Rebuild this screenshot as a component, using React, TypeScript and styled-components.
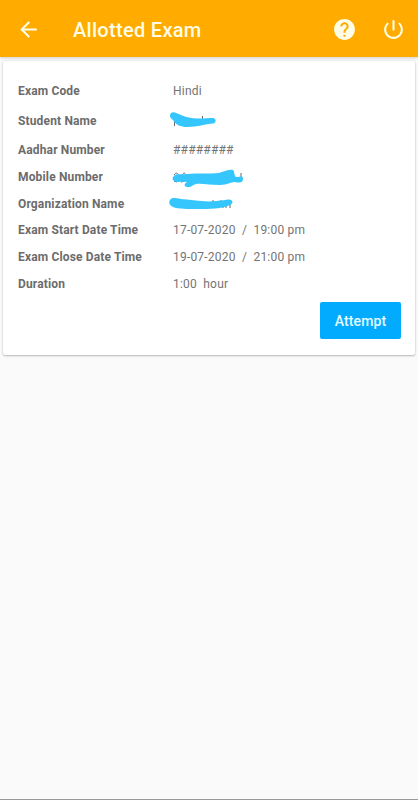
import React from "react";
import styled, { createGlobalStyle } from "styled-components";

const GlobalStyle = createGlobalStyle`
  * { box-sizing: border-box; }
  body { margin: 0; background: #fafafa; font-family: Roboto, sans-serif; }
`;

const Screen = styled.div`
  height: 800px;
  display: flex;
  flex-direction: column;
  background: #fafafa;
  border-bottom: 1px solid #999;
  overflow: hidden;
`;

const Toolbar = styled.header`
  height: 57px;
  flex: none;
  display: flex;
  align-items: center;
  padding: 2px 12px 0 16px;
  background: #ffab00;
  box-shadow: 0 1px 3px rgba(0, 0, 0, 0.18);
  color: #fffde6;
`;

const Title = styled.h1`
  flex: 1;
  margin: 0 0 0 32px;
  font-size: 20px;
  line-height: 28px;
  font-weight: 500;
  letter-spacing: 0.3px;
  white-space: nowrap;
`;

const IconButton = styled.button<{ $gap?: number }>`
  display: flex;
  margin: 0 0 0 ${(p) => p.$gap ?? 0}px;
  padding: 0;
  border: 0;
  background: none;
  color: inherit;
`;

const Card = styled.main`
  height: 294px;
  margin: 4px 3px 0;
  padding: 15px 14px 0 15px;
  display: flex;
  flex-direction: column;
  background: #fff;
  border-radius: 2px;
  box-shadow: 0 1px 2px rgba(0, 0, 0, 0.24), 0 0 2px rgba(0, 0, 0, 0.12);
`;

const Details = styled.dl`
  margin: 0;
`;

const Row = styled.div<{ $height: number }>`
  height: ${(p) => p.$height}px;
  display: grid;
  grid-template-columns: 155px 1fr;
  align-items: center;
  font-size: 12px;
  line-height: 16px;
  color: #747474;
`;

const Label = styled.dt`
  font-weight: 700;
  color: #6c6c6c;
  letter-spacing: 0.15px;
  white-space: nowrap;
`;

const Value = styled.dd`
  position: relative;
  height: 16px;
  margin: 0;
  letter-spacing: 0.2px;
  white-space: pre;
`;

const Scribble = styled.svg`
  position: absolute;
  left: -5px;
  top: -1px;
`;

const AttemptButton = styled.button`
  align-self: flex-end;
  width: 81px;
  height: 37px;
  margin-top: 5px;
  padding: 2px 0 0;
  border: 0;
  border-radius: 2px;
  background: #03abff;
  color: #e5fcff;
  font: 500 14px/20px Roboto, sans-serif;
  letter-spacing: 0.1px;
`;

const Icon = ({ d, size }: { d: string; size: number }) => (
  <svg width={size} height={size} viewBox="0 0 24 24" fill="currentColor">
    <path d={d} />
  </svg>
);

const BACK = "M20 11H7.83l5.59-5.59L12 4l-8 8 8 8 1.41-1.41L7.83 13H20v-2z";
const HELP =
  "M12 2C6.48 2 2 6.48 2 12s4.48 10 10 10 10-4.48 10-10S17.52 2 12 2zm1 17h-2v-2h2v2zm2.07-7.75l-.9.92C13.45 12.9 13 13.5 13 15h-2v-.5c0-1.1.45-2.1 1.17-2.83l1.24-1.26c.37-.36.59-.86.59-1.41 0-1.1-.9-2-2-2s-2 .9-2 2H8c0-2.21 1.79-4 4-4s4 1.79 4 4c0 .88-.36 1.68-.93 2.25z";
const POWER =
  "M13 3h-2v10h2V3zm4.83 2.17l-1.42 1.42C17.99 7.86 19 9.81 19 12c0 3.87-3.13 7-7 7s-7-3.13-7-7c0-2.19 1.01-4.14 2.58-5.42L6.17 5.17C4.23 6.82 3 9.26 3 12c0 4.97 4.03 9 9 9s9-4.03 9-9c0-2.74-1.23-5.18-3.17-6.83z";

type Mask = { fill: string; traces: string };

// Hand-drawn strokes that hide private values, with the slivers left visible.
const NAME_MASK: Mask = {
  fill: "M3 1C5-1 9 1 13 3C18 5 23 6.5 30 6.5C36 6.5 41 6 45 6C48.5 6.5 48.5 11 45 11.5C37 12 30 15 19 15C13 15 8 13 5 8C2 6 1 3 3 1Z",
  traces: "M6.5 8V14M34.5 4V7",
};
const MOBILE_MASK: Mask = {
  fill: "M6 8C8 5 14 7 19 6C29 5 41 6 51 5C57 3 62 1 65 2C67 4 66 8 68 9C73 9 75 7 75 11C75 15 71 15 67 14C62 14 60 17 52 17C42 17 33 15 28 16C24 17 23 20 19 19C15 18 17 15 19 14C14 13 9 15 6 13C4 11 4 10 6 8Z",
  traces: "M6 7C8 4 9 5 11 7M14 7C16 4 17 5 18 7M6 13L9 14M13 14L17 13M73 5V14",
};
const ORGANIZATION_MASK: Mask = {
  fill: "M5 3C9 3 19 5 33 6C42 7 52 6 60 4.5C65 4 66 8 62 10C55 14 40 14 31 14C20 14 10 14 5 12C-1 9 1 4 5 3Z",
  traces: "M45 5V7M53 5V7M51 10V13M55 10V13M58 9V13M62 8V13",
};

type Field = {
  label: string;
  height: number;
  value?: string;
  mask?: Mask;
};

const FIELDS: Field[] = [
  { label: "Exam Code", height: 30, value: "Hindi" },
  { label: "Student Name", height: 30, mask: NAME_MASK },
  { label: "Aadhar Number", height: 28, value: "########" },
  { label: "Mobile Number", height: 26, mask: MOBILE_MASK },
  { label: "Organization Name", height: 27, mask: ORGANIZATION_MASK },
  { label: "Exam Start Date Time", height: 26.5, value: "17-07-2020  /  19:00 pm" },
  { label: "Exam Close Date Time", height: 26.7, value: "19-07-2020  /  21:00 pm" },
  { label: "Duration", height: 26.8, value: "1:00  hour" },
];

export default function App() {
  return (
    <Screen>
      <GlobalStyle />
      <Toolbar>
        <IconButton aria-label="Back">
          <Icon d={BACK} size={25} />
        </IconButton>
        <Title>Allotted Exam</Title>
        <IconButton aria-label="Help">
          <Icon d={HELP} size={25} />
        </IconButton>
        <IconButton aria-label="Log out" $gap={24}>
          <Icon d={POWER} size={25} />
        </IconButton>
      </Toolbar>
      <Card>
        <Details>
          {FIELDS.map((f) => (
            <Row key={f.label} $height={f.height}>
              <Label>{f.label}</Label>
              <Value>
                {f.value}
                {f.mask && (
                  <Scribble width="78" height="20">
                    <path d={f.mask.traces} fill="none" stroke="#666" strokeWidth="1" />
                    <path d={f.mask.fill} fill="#34c6fc" />
                  </Scribble>
                )}
              </Value>
            </Row>
          ))}
        </Details>
        <AttemptButton>Attempt</AttemptButton>
      </Card>
    </Screen>
  );
}
